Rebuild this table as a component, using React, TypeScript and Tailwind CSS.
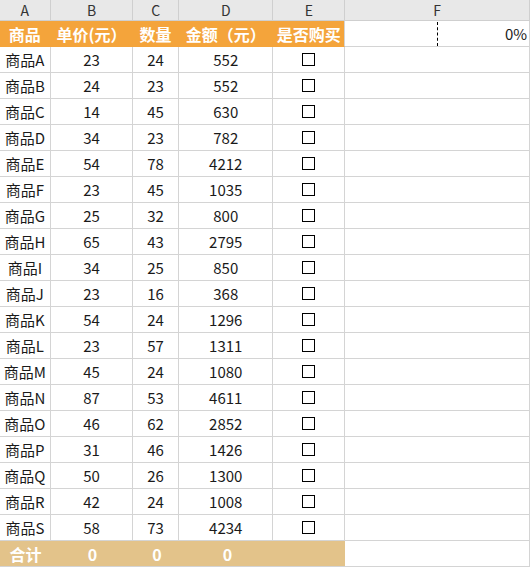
import React from 'react'

interface Item {
  name: string
  price: number
  qty: number
}

const items: Item[] = [
  { name: '商品A', price: 23, qty: 24 },
  { name: '商品B', price: 24, qty: 23 },
  { name: '商品C', price: 14, qty: 45 },
  { name: '商品D', price: 34, qty: 23 },
  { name: '商品E', price: 54, qty: 78 },
  { name: '商品F', price: 23, qty: 45 },
  { name: '商品G', price: 25, qty: 32 },
  { name: '商品H', price: 65, qty: 43 },
  { name: '商品I', price: 34, qty: 25 },
  { name: '商品J', price: 23, qty: 16 },
  { name: '商品K', price: 54, qty: 24 },
  { name: '商品L', price: 23, qty: 57 },
  { name: '商品M', price: 45, qty: 24 },
  { name: '商品N', price: 87, qty: 53 },
  { name: '商品O', price: 46, qty: 62 },
  { name: '商品P', price: 31, qty: 46 },
  { name: '商品Q', price: 50, qty: 26 },
  { name: '商品R', price: 42, qty: 24 },
  { name: '商品S', price: 58, qty: 73 },
]

const cell = 'flex items-center justify-center border-r border-b border-[#d4d4d4] h-[26px]'
const letter = 'flex items-center justify-center border-r border-b border-[#cfcfcf]'

const App: React.FC = () => {
  return (
    <div
      className="w-[530px] h-[569px] overflow-hidden bg-white text-[15px] text-[#1a1a1a] leading-none"
      style={{ fontFamily: '"Noto Sans CJK SC", "Noto Sans", sans-serif' }}
    >
      {/* column letters */}
      <div className="flex h-[21px] bg-[#e8e8e8] text-[14px] text-[#333]">
        <div className={`${letter} w-[51px]`}>A</div>
        <div className={`${letter} w-[83px]`}>B</div>
        <div className={`${letter} w-[46px]`}>C</div>
        <div className={`${letter} w-[95px]`}>D</div>
        <div className={`${letter} w-[72px]`}>E</div>
        <div className={`${letter} w-[186px]`}>F</div>
      </div>

      {/* header */}
      <div className="flex font-bold text-white text-[16px]">
        <div className={`${cell} w-[51px] bg-[#f4a43b] border-[#f4a43b]`}>商品</div>
        <div className={`${cell} w-[83px] bg-[#f4a43b] border-[#f4a43b]`}>单价(元）</div>
        <div className={`${cell} w-[46px] bg-[#f4a43b] border-[#f4a43b]`}>数量</div>
        <div className={`${cell} w-[95px] bg-[#f4a43b] border-[#f4a43b]`}>金额（元）</div>
        <div className={`${cell} w-[72px] bg-[#f4a43b] border-[#f4a43b] border-r-[#d4d4d4] whitespace-nowrap`}>是否购买</div>
        <div className={`${cell} w-[186px] relative justify-end pr-[2px] font-normal text-[15px] text-[#1a1a1a]`}>
          <span className="absolute left-[92px] top-[1px] h-[24px] border-l border-dashed border-black" />
          0%
        </div>
      </div>

      {items.map((it) => (
        <div key={it.name} className="flex">
          <div className={`${cell} w-[51px] whitespace-nowrap`}>{it.name}</div>
          <div className={`${cell} w-[83px]`}>{it.price}</div>
          <div className={`${cell} w-[46px]`}>{it.qty}</div>
          <div className={`${cell} w-[95px]`}>{it.price * it.qty}</div>
          <div className={`${cell} w-[72px]`}>
            <span className="w-[13px] h-[13px] border border-black bg-white" />
          </div>
          <div className={`${cell} w-[186px]`} />
        </div>
      ))}

      {/* total */}
      <div className="flex font-bold text-white text-[16px]">
        <div className="flex w-[347px] h-[26px] bg-[#e3c38a] border-b border-[#d4d4d4]">
          <div className="w-[51px] flex items-center justify-center">合计</div>
          <div className="w-[83px] flex items-center justify-center">0</div>
          <div className="w-[46px] flex items-center justify-center">0</div>
          <div className="w-[95px] flex items-center justify-center">0</div>
        </div>
        <div className={`${cell} w-[186px]`} />
      </div>
    </div>
  )
}

export default App
